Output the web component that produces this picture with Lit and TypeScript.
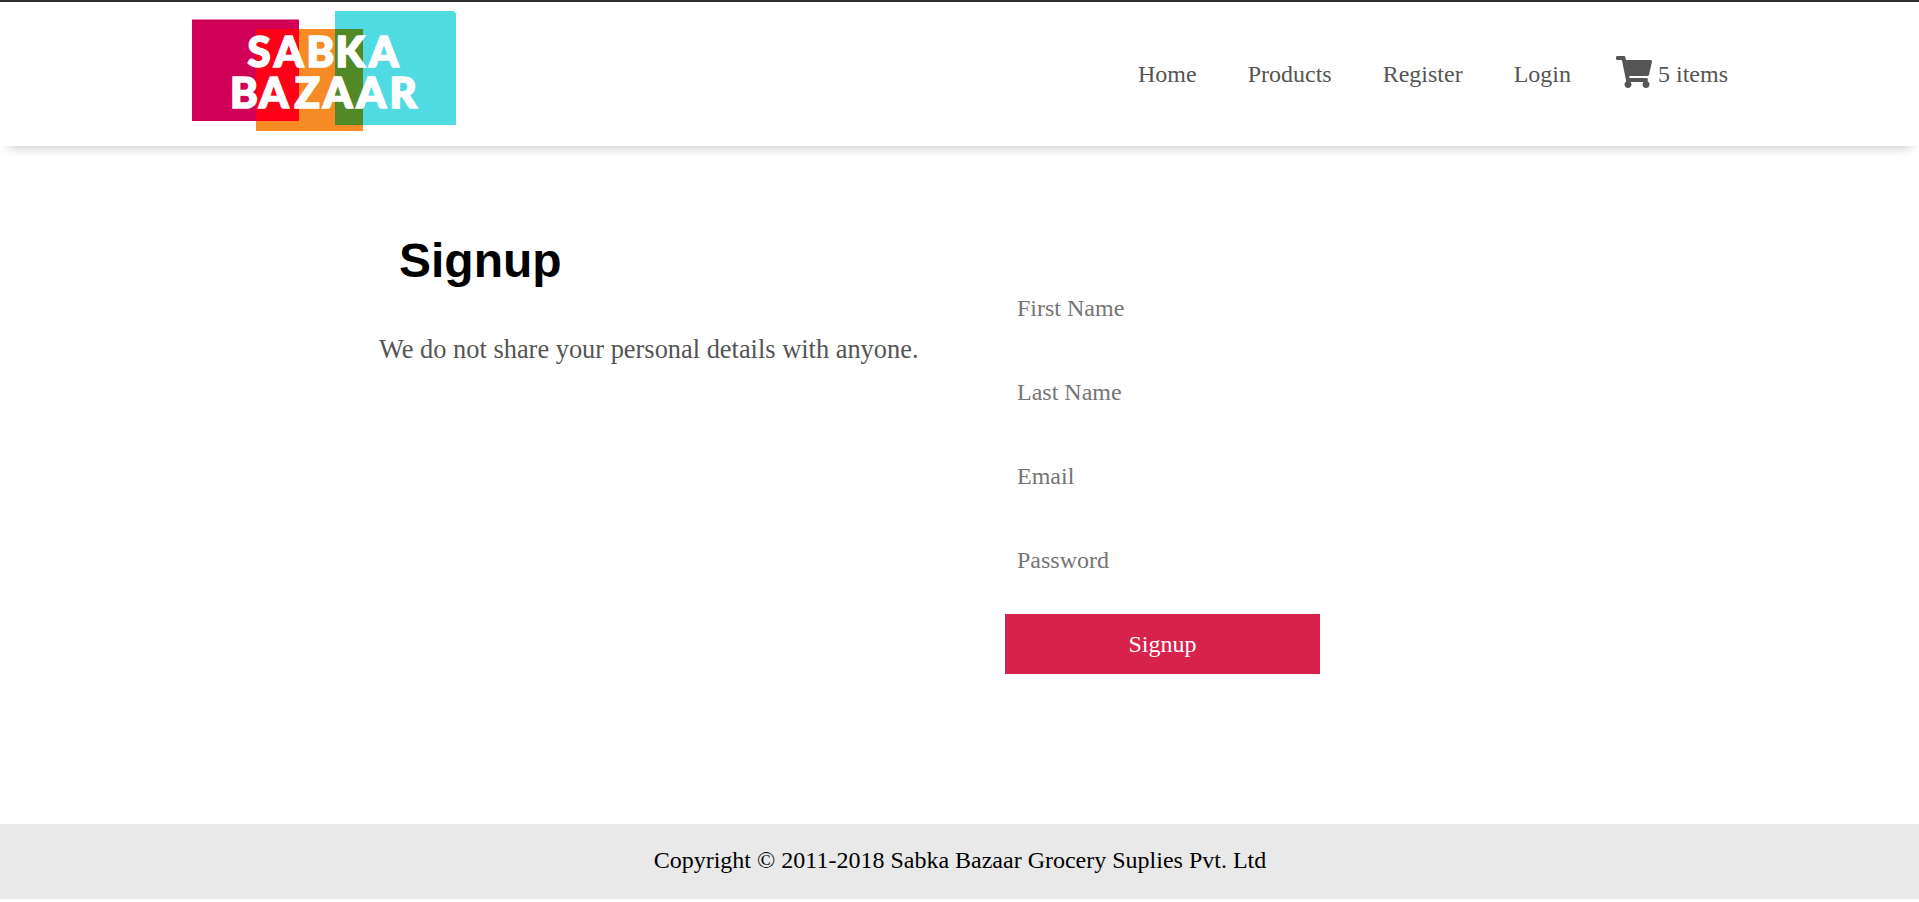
import { LitElement, html, css } from "lit";
import { customElement } from "lit/decorators.js";

@customElement("brand-logo")
class BrandLogo extends LitElement {
  static styles = css`
    :host { display: block; width: 264px; height: 120px; }
    svg { display: block; }
    .word { font: 900 42px/1 Lato, "Open Sans", sans-serif; fill: #fff; stroke: #fff; stroke-width: 1.7px; }
  `;
  render() {
    return html`
      <svg width="264" height="120" viewBox="0 0 264 120" role="img" aria-label="Sabka Bazaar">
        <rect x="0" y="8.5" width="107" height="101.5" fill="#cf0056" />
        <rect x="64" y="18" width="107" height="102" fill="#f68b26" />
        <path d="M143 0h117a4 4 0 0 1 4 4v110H143z" fill="#50dbe3" />
        <rect x="64" y="18" width="43" height="92" fill="#ff0018" />
        <rect x="143" y="18" width="28" height="96" fill="#508926" />
        <text class="word" y="56.2" x="55.5 82 114.5 143.5 177">SABKA</text>
        <text class="word" y="96.6" x="38 67 102.5 131 164.5 197.5">BAZAAR</text>
      </svg>
    `;
  }
}

@customElement("app-root")
class AppRoot extends LitElement {
  static styles = css`
    * { box-sizing: border-box; }
    :host {
      display: flex;
      flex-direction: column;
      height: 902px;
      background: #fff;
      color: #555;
      font: 24px/28px "Liberation Serif", serif;
    }
    header {
      display: flex;
      justify-content: space-between;
      height: 146px;
      padding: 9px 191px 0 192px;
      border-top: 2px solid #2f2e33;
      box-shadow: 0 10px 10px -8px rgba(0, 0, 0, 0.2);
    }
    nav { display: flex; align-items: center; gap: 51px; height: 126px; }
    nav a { color: inherit; text-decoration: none; }
    .cart { display: flex; align-items: center; gap: 6px; margin-left: -6px; }
    .cart svg { display: block; margin-top: -4px; }
    main { display: flex; flex: 1; padding: 84px 0 0 379px; }
    .intro { width: 626px; }
    h1 {
      margin: 1px 0 44px 20px;
      font: bold 48px/60px "Liberation Sans", sans-serif;
      color: #000;
    }
    p { margin: 0; font-size: 26.4px; }
    form { display: flex; flex-direction: column; gap: 24px; width: 315px; padding-top: 48px; }
    input, button { height: 60px; border: 0; border-radius: 0; font: inherit; }
    input { padding: 0 12px; background: transparent; }
    input::placeholder { color: #757575; }
    button { background: #d7224c; color: #fff; }
    footer {
      display: flex;
      justify-content: center;
      align-items: center;
      height: 75px;
      margin-bottom: 3px;
      padding: 0 0 3px 1px;
      background: #e9e9e9;
      color: #000;
    }
  `;
  render() {
    return html`
      <header>
        <brand-logo></brand-logo>
        <nav>
          <a>Home</a><a>Products</a><a>Register</a><a>Login</a>
          <a class="cart">
            <svg width="36" height="32" viewBox="0 0 576 512" fill="currentColor">
              <path d="M528.12 301.319l47.273-208C578.806 78.301 567.391 64 551.99 64H159.208l-9.166-44.81C147.758 8.021 137.93 0 126.529 0H24C10.745 0 0 10.745 0 24v16c0 13.255 10.745 24 24 24h69.883l70.248 343.435C147.325 417.1 136 435.222 136 456c0 30.928 25.072 56 56 56s56-25.072 56-56c0-15.674-6.447-29.835-16.824-40h209.647C430.447 426.165 424 440.326 424 456c0 30.928 25.072 56 56 56s56-25.072 56-56c0-22.172-12.888-41.332-31.579-50.405l5.517-24.276c3.413-15.018-8.002-29.319-23.403-29.319H218.117l-6.545-32h293.145c11.206 0 20.92-7.754 23.403-18.681z" />
            </svg>
            <span>5 items</span>
          </a>
        </nav>
      </header>
      <main>
        <section class="intro">
          <h1>Signup</h1>
          <p>We do not share your personal details with anyone.</p>
        </section>
        <form>
          <input type="text" placeholder="First Name" />
          <input type="text" placeholder="Last Name" />
          <input type="email" placeholder="Email" />
          <input type="password" placeholder="Password" />
          <button type="button">Signup</button>
        </form>
      </main>
      <footer>Copyright © 2011-2018 Sabka Bazaar Grocery Suplies Pvt. Ltd</footer>
    `;
  }
}
